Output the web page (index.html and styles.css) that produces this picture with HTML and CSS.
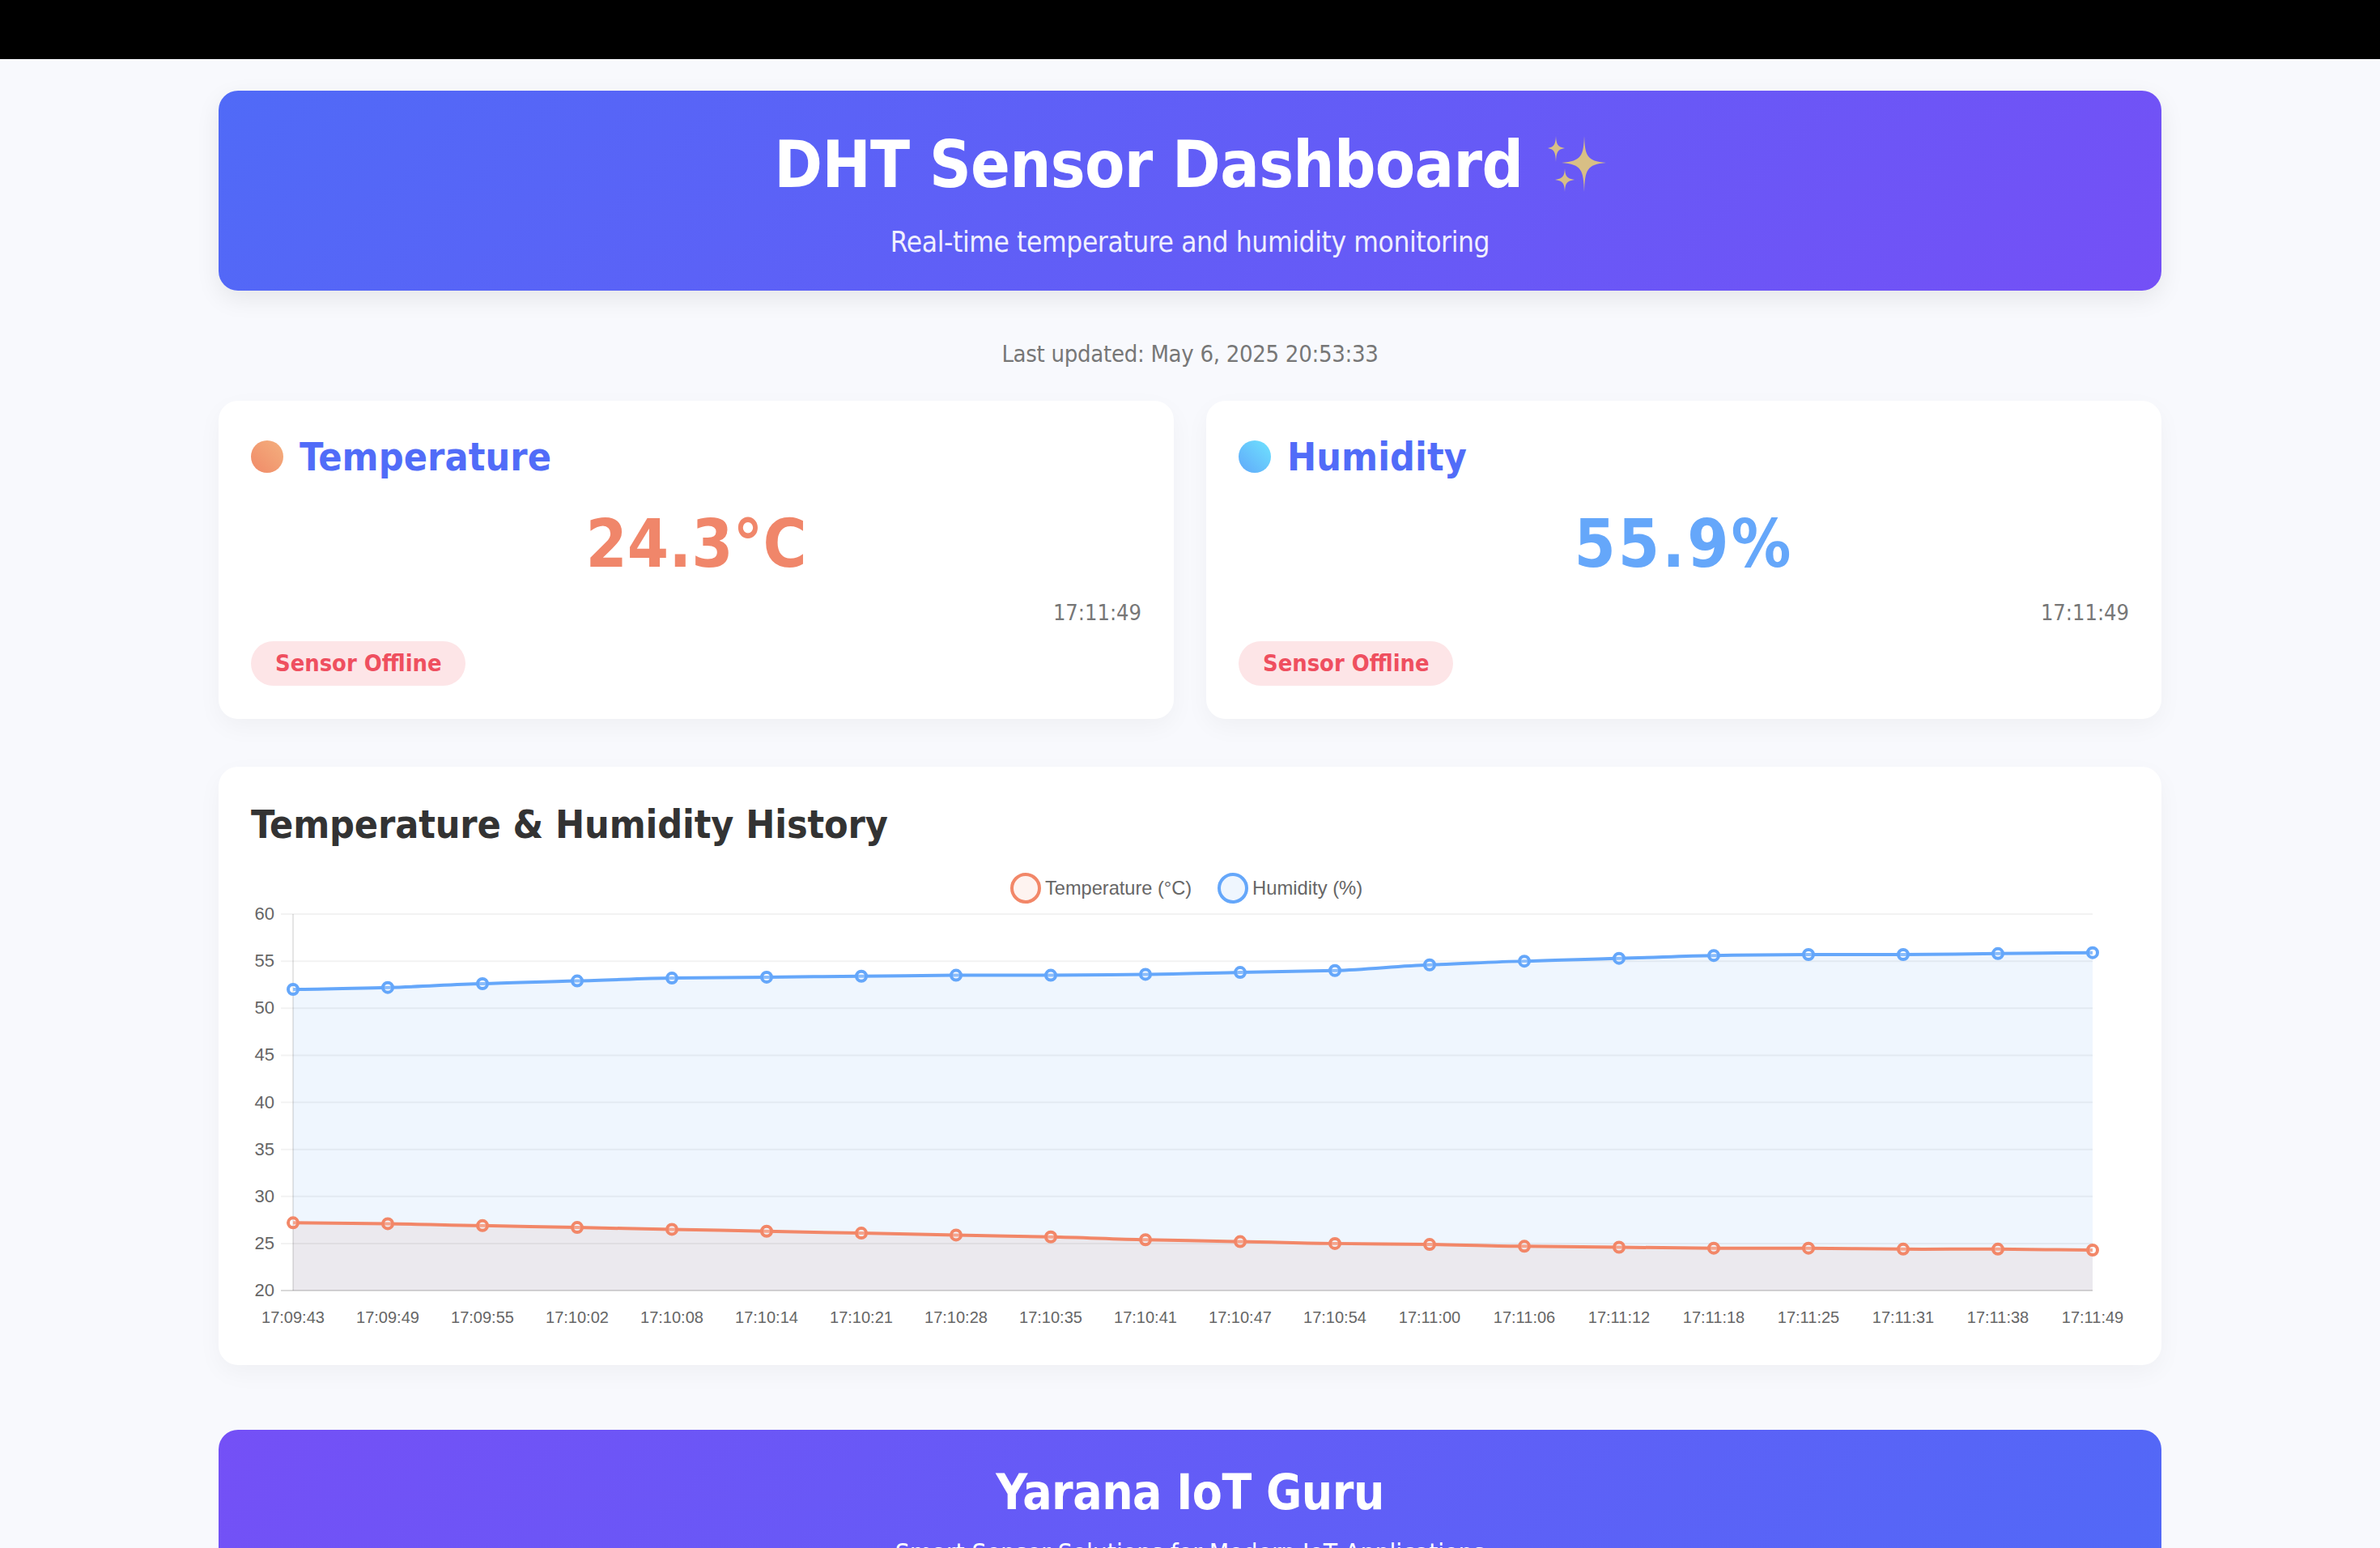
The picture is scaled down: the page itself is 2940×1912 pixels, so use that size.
FILE: index.html
```html
<!doctype html>
<html lang="en">
<head>
    <title>DHT Sensor Dashboard</title>
    <link rel="stylesheet" href="styles.css">
</head>
<body>
    <div class="top-bar"></div>
    <div class="container">
        <header class="header">
            <h1>DHT Sensor Dashboard
                <svg class="sparkles" viewBox="0 0 72 69" width="72" height="69" aria-hidden="true">
                    <path d="M45 0 C46 24 48 31 72 33 C48 35 46 42 45 69 C44 42 42 35 17 33 C42 31 44 24 45 0Z"/>
                    <path d="M10 0 C10.500 10 12 13.500 21 15 C12 16.500 10.500 20 10 32 C9.500 20 8 16.500 0 15 C8 13.500 9.500 10 10 0Z"/>
                    <path d="M21 40 C21.500 49 23 52.500 33 54 C23 55.500 21.500 59 21 69 C20.500 59 19 55.500 9 54 C19 52.500 20.500 49 21 40Z"/>
                </svg>
            </h1>
            <p>Real-time temperature and humidity monitoring</p>
        </header>

        <div class="last-updated">Last updated: May 6, 2025 20:53:33</div>

        <div class="cards">
            <div class="card">
                <h2 class="card-title"><span class="dot dot-temp"></span>Temperature</h2>
                <div class="reading reading-temp">24.3°C</div>
                <div class="timestamp">17:11:49</div>
                <span class="status">Sensor Offline</span>
            </div>
            <div class="card">
                <h2 class="card-title"><span class="dot dot-hum"></span>Humidity</h2>
                <div class="reading reading-hum">55.9%</div>
                <div class="timestamp">17:11:49</div>
                <span class="status">Sensor Offline</span>
            </div>
        </div>

        <div class="chart-card">
            <h2>Temperature &amp; Humidity History</h2>
            <svg id="chart" class="chart" viewBox="0 0 2320 620" width="2320" height="620"></svg>
        </div>

        <footer class="footer">
            <h2>Yarana IoT Guru</h2>
            <p>Smart Sensor Solutions for Modern IoT Applications</p>
        </footer>
    </div>
    <script src="chart.js"></script>
</body>
</html>
```

FILE: styles.css
```css
html, body {
    margin: 0;
    height: 1912px;
    overflow: hidden;
}
body {
    background: #f8f9fd;
    font-family: "DejaVu Sans", sans-serif;
    font-stretch: condensed;
    color: #333;
}
.top-bar {
    height: 73px;
    background: #000;
}
.container {
    width: 2400px;
    margin: 0 auto;
    padding-top: 39px;
}
.header {
    height: 247px;
    box-sizing: border-box;
    padding-top: 42px;
    text-align: center;
    color: #fff;
    border-radius: 24px;
    background: linear-gradient(135deg, #506af7, #7450f6);
    box-shadow: 0 10px 30px rgba(0, 0, 0, 0.08);
}
.header h1 {
    margin: 0;
    font-size: 80px;
    letter-spacing: -0.65px;
    line-height: 100px;
}
.sparkles {
    fill: #d8bf85;
    vertical-align: -6px;
    margin-left: 6px;
}
.header p {
    margin: 23px 0 0;
    font-size: 35px;
    letter-spacing: -0.4px;
    line-height: 44px;
    opacity: 0.9;
}
.last-updated {
    margin: 60px 0 40px;
    text-align: center;
    font-size: 29px;
    letter-spacing: -0.3px;
    line-height: 36px;
    color: #777;
}
.cards {
    display: grid;
    grid-template-columns: 1fr 1fr;
    gap: 40px;
}
.card {
    height: 393px;
    box-sizing: border-box;
    padding: 40px;
    background: #fff;
    border-radius: 24px;
    box-shadow: 0 10px 30px rgba(0, 0, 0, 0.04);
}
.card-title {
    display: flex;
    align-items: center;
    gap: 20px;
    margin: 0;
    font-size: 48px;
    letter-spacing: 0.1px;
    line-height: 58px;
    color: #516cf8;
}
.dot {
    width: 40px;
    height: 40px;
    border-radius: 50%;
}
.dot-temp {
    background: linear-gradient(45deg, #f08a68, #f4b07e);
}
.dot-hum {
    background: linear-gradient(45deg, #60a8fa, #6fe3fe);
}
.reading {
    margin-top: 29px;
    text-align: center;
    font-size: 82px;
    font-weight: 700;
    line-height: 100px;
}
.reading-temp {
    color: #f0866a;
}
.reading-hum {
    color: #65a7fa;
    letter-spacing: 3px;
}
.timestamp {
    margin-top: 18px;
    text-align: right;
    font-size: 27px;
    line-height: 34px;
    color: #777;
}
.status {
    display: inline-block;
    margin-top: 18px;
    padding: 0 29px 0 30px;
    font-size: 28.800px;
    font-weight: 700;
    line-height: 55px;
    color: #ef4f5f;
    background: #fde5e7;
    border-radius: 28px;
}
.chart-card {
    height: 739px;
    box-sizing: border-box;
    margin-top: 59px;
    padding: 40px;
    background: #fff;
    border-radius: 24px;
    box-shadow: 0 10px 30px rgba(0, 0, 0, 0.04);
}
.chart-card h2 {
    margin: 0;
    font-size: 48px;
    letter-spacing: -0.12px;
    line-height: 62px;
}
.chart {
    display: block;
}
.chart text {
    font-family: "Liberation Sans", sans-serif;
    font-stretch: normal;
    fill: #666;
}
.footer {
    height: 300px;
    box-sizing: border-box;
    margin-top: 80px;
    padding-top: 40px;
    text-align: center;
    color: #fff;
    border-radius: 24px;
    background: linear-gradient(135deg, #7450f6, #506af7);
}
.footer h2 {
    margin: 0;
    font-size: 60px;
    letter-spacing: -0.5px;
    line-height: 74px;
}
.footer p {
    margin: 20px 0 0;
    font-size: 31.500px;
    line-height: 36px;
}
```

FILE: chart.js
```js
const svg = document.getElementById('chart');
const NS = 'http://www.w3.org/2000/svg';

const labels = ['17:09:43', '17:09:49', '17:09:55', '17:10:02', '17:10:08', '17:10:14', '17:10:21',
    '17:10:28', '17:10:35', '17:10:41', '17:10:47', '17:10:54', '17:11:00', '17:11:06', '17:11:12',
    '17:11:18', '17:11:25', '17:11:31', '17:11:38', '17:11:49'];
const humidity = [52.0, 52.2, 52.6, 52.9, 53.2, 53.3, 53.4, 53.5, 53.5, 53.6,
    53.8, 54.0, 54.6, 55.0, 55.3, 55.6, 55.7, 55.7, 55.8, 55.9];
const temperature = [27.2, 27.1, 26.9, 26.7, 26.5, 26.3, 26.1, 25.9, 25.7, 25.4,
    25.2, 25.0, 24.9, 24.7, 24.6, 24.5, 24.5, 24.4, 24.4, 24.3];

const ORANGE = '#f28768', BLUE = '#65a7fa';

// svg sits at page x=310, y=1048
const plotLeft = 52, plotRight = 2275, plotTop = 80, plotBottom = 545;
const stepX = (plotRight - plotLeft) / (labels.length - 1);
const xAt = (i) => plotLeft + i * stepX;
const yAt = (v) => plotBottom - (v - 20) * (plotBottom - plotTop) / 40;

function add(tag, attrs, text) {
    const el = document.createElementNS(NS, tag);
    for (const k in attrs) el.setAttribute(k, attrs[k]);
    if (text) el.textContent = text;
    svg.appendChild(el);
    return el;
}

// smooth line through the points, same idea as chart.js tension
function linePath(values) {
    const pts = values.map((v, i) => [xAt(i), yAt(v)]);
    let d = `M${pts[0][0]} ${pts[0][1]}`;
    for (let i = 0; i < pts.length - 1; i++) {
        const p0 = pts[Math.max(i - 1, 0)], p1 = pts[i], p2 = pts[i + 1], p3 = pts[Math.min(i + 2, pts.length - 1)];
        const c1y = p1[1] + (p2[1] - p0[1]) * 0.1;
        const c2y = p2[1] - (p3[1] - p1[1]) * 0.1;
        d += ` C${p1[0] + stepX / 3} ${c1y} ${p2[0] - stepX / 3} ${c2y} ${p2[0]} ${p2[1]}`;
    }
    return d;
}

function drawSeries(values, color, fill) {
    const line = linePath(values);
    add('path', { d: `${line} L${plotRight} ${plotBottom} L${plotLeft} ${plotBottom}Z`, fill });
    return () => {
        add('path', { d: line, fill: 'none', stroke: color, 'stroke-width': 4 });
        // marker fill is see-through, the line shows inside the ring
        values.forEach((v, i) => {
            add('circle', { cx: xAt(i), cy: yAt(v), r: 6, fill: 'rgba(255, 255, 255, 0.25)', stroke: color, 'stroke-width': 4 });
        });
    };
}

// fills go under the grid lines, lines and points on top
const drawTemp = drawSeries(temperature, ORANGE, 'rgba(215, 125, 100, 0.11)');
const drawHum = drawSeries(humidity, BLUE, 'rgba(96, 165, 250, 0.1)');

for (let v = 20; v <= 60; v += 5) {
    const y = yAt(v);
    add('line', { x1: plotLeft - 15, x2: plotRight, y1: y, y2: y, stroke: v === 20 ? 'rgba(0,0,0,0.15)' : 'rgba(0,0,0,0.05)', 'stroke-width': 2 });
    add('text', { x: plotLeft - 23, y: y + 7, 'text-anchor': 'end', 'font-size': 22 }, String(v));
}
add('line', { x1: plotLeft, x2: plotLeft, y1: plotTop, y2: plotBottom, stroke: 'rgba(0,0,0,0.1)', 'stroke-width': 2 });

labels.forEach((label, i) => {
    add('text', { x: xAt(i), y: plotBottom + 40, 'text-anchor': 'middle', 'font-size': 20 }, label);
});

drawTemp();
drawHum();

// legend
add('circle', { cx: 957, cy: 48, r: 17, fill: 'rgba(242, 135, 104, 0.1)', stroke: ORANGE, 'stroke-width': 4 });
add('text', { x: 981, y: 56, 'font-size': 23.6 }, 'Temperature (°C)');
add('circle', { cx: 1213, cy: 48, r: 17, fill: 'rgba(96, 165, 250, 0.1)', stroke: BLUE, 'stroke-width': 4 });
add('text', { x: 1237, y: 56, 'font-size': 23.8 }, 'Humidity (%)');
```
